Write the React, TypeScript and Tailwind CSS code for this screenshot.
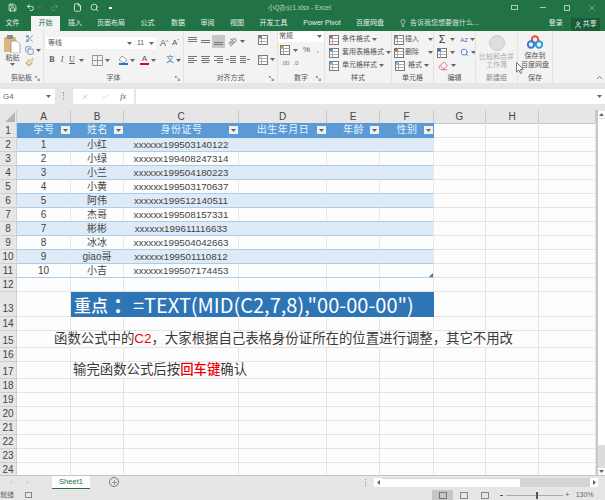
import { ReactNode } from 'react';
import { Check, ChevronUp, Copy, Eraser, File, Lightbulb, Paintbrush, Plus, Redo2, Save, Scissors, Search, Undo2, User, X } from 'lucide-react';

const CJK = "font-['Liberation_Sans','Noto_Sans_CJK_SC',sans-serif]";
const COLS = 'grid grid-cols-[17px_54px_53px_115px_88px_53px_54px_52px_53px_57px]';

const people = [
  ['1', '小红', 'xxxxxx199503140122'],
  ['2', '小绿', 'xxxxxx199408247314'],
  ['3', '小兰', 'xxxxxx199504180223'],
  ['4', '小黄', 'xxxxxx199503170637'],
  ['5', '阿伟', 'xxxxxx199512140511'],
  ['6', '杰哥', 'xxxxxx199508157331'],
  ['7', '彬彬', 'xxxxxx199611116633'],
  ['8', '冰冰', 'xxxxxx199504042663'],
  ['9', 'giao哥', 'xxxxxx199501110812'],
  ['10', '小吉', 'xxxxxx199507174453'],
];

function Caret({ className = 'mx-[2px]' }: { className?: string }) {
  return (
    <svg width="5" height="3" viewBox="0 0 5 3" className={`shrink-0 ${className}`}>
      <path d="M0 0h5L2.5 3z" fill="#666" />
    </svg>
  );
}

// horizontal lines for the alignment buttons
function Lines({ rows, active }: { rows: [number, number, number][]; active?: boolean }) {
  return (
    <span className={`flex h-[13px] w-[13px] items-center justify-center ${active ? 'bg-[#c6c6c6]' : ''}`}>
      <svg width="11" height="11" viewBox="0 0 11 11">
        {rows.map(([y, x, w], i) => (
          <rect key={i} x={x} y={y} width={w} height="1" fill="#777" />
        ))}
      </svg>
    </span>
  );
}

function Launcher() {
  return (
    <svg width="5" height="5" viewBox="0 0 5 5" className="shrink-0">
      <path d="M0 .5h2M.5 0v2M1.5 1.5l3 3M2.5 4.5h2v-2" stroke="#777" strokeWidth=".7" fill="none" />
    </svg>
  );
}

function Group({ label, w, children, launcher, muted }: { label: string; w: string; children: ReactNode; launcher?: boolean; muted?: boolean }) {
  return (
    <div className={`flex h-[52px] shrink-0 flex-col border-r border-[#e2e2e2] ${w}`}>
      <div className="h-[41px] overflow-hidden">{children}</div>
      <div className={`relative mt-[1px] text-center text-[7px] leading-[9px] ${muted ? 'text-[#888]' : 'text-[#555]'}`}>
        {label}
        {launcher && <span className="absolute right-[3px] top-[3px] flex"><Launcher /></span>}
      </div>
    </div>
  );
}

function StyleRow({ icon, text, caretGap }: { icon: ReactNode; text: string; caretGap?: boolean }) {
  return (
    <div className="flex h-[13px] items-center text-[7px] text-[#555]">
      <span className="mr-[1px] flex w-[14px] justify-center">{icon}</span>
      <span className="whitespace-nowrap">{text}</span>
      <Caret className={caretGap ? 'ml-[9px]' : 'ml-[2px]'} />
    </div>
  );
}

function TableIcon({ tint = '#4a90c8' }: { tint?: string }) {
  return (
    <svg width="10" height="10" viewBox="0 0 10 10">
      <rect x=".5" y=".5" width="9" height="9" fill="#fff" stroke="#777" />
      <path d="M.5 3.5h9M.5 6.5h9M3.5.5v9" stroke="#aaa" />
      <rect x="1" y="1" width="3" height="2" fill={tint} />
    </svg>
  );
}

function Ribbon() {
  return (
    <div className="flex h-[52px] bg-[#f3f3f3]">
      <Group label="剪贴板" w="w-[44px]" launcher>
        <div className="flex pl-[3px] pt-[3px]">
          <div className="flex w-[19px] flex-col items-center">
            <svg width="17" height="19" viewBox="0 0 17 19">
              <rect x="0" y="3" width="12" height="15" rx="1" fill="#dcb67a" />
              <rect x="3" y="1" width="6" height="4" fill="#8a8a8a" />
              <path d="M7 7h6l3 3v9H7z" fill="#fff" stroke="#888" strokeWidth=".7" />
            </svg>
            <span className="text-[7px] leading-[10px] text-[#555]">粘贴</span>
            <Caret />
          </div>
          <div className="ml-[3px] flex flex-col gap-[3px]">
            <Scissors size={9} color="#5a7fa8" />
            <div className="flex items-center">
              <Copy size={9} color="#5a7fa8" />
              <Caret />
            </div>
            <Paintbrush size={9} color="#c9973c" />
          </div>
        </div>
      </Group>

      <Group label="字体" w="w-[140px]" launcher>
        <div className="flex items-center pl-[2px] pt-[6px]">
          <div className="flex h-[12px] w-[88px] items-center justify-between bg-white pl-[2px] text-[7px] text-[#555]">
            等线<Caret />
          </div>
          <div className="ml-[1px] flex h-[12px] w-[21px] items-center justify-between bg-white pl-[2px] text-[7px] text-[#555]">
            11<Caret />
          </div>
          <span className="ml-[4px] w-[12px] text-[9px] leading-[12px] text-[#555]">A<sup className="text-[5px] text-[#2b6cb0]">^</sup></span>
          <span className="w-[10px] text-[8px] leading-[12px] text-[#555]">A<sup className="text-[5px] text-[#2b6cb0]">ˇ</sup></span>
        </div>
        <div className="mt-[5px] flex items-center pl-[3px] text-[#555]">
          <span className="w-[12px] text-center font-['Liberation_Serif',serif] text-[8px] font-bold">B</span>
          <span className="w-[12px] text-center font-['Liberation_Serif',serif] text-[8px] italic">I</span>
          <span className="w-[12px] text-center font-['Liberation_Serif',serif] text-[8px] underline">U</span>
          <Caret />
          <span className="ml-[6px] flex"><svg width="11" height="11" viewBox="0 0 11 11"><path d="M.5.5h10v10H.5zM5.5.5v10M.5 5.5h10" stroke="#999" fill="none" /></svg></span>
          <Caret />
          <span className="ml-[6px] flex flex-col items-center">
            <svg width="10" height="7" viewBox="0 0 10 7"><path d="M4 0l5 4-3 3-5-3z" fill="#fff" stroke="#777" strokeWidth=".7" /></svg>
            <span className="h-[2px] w-[9px] bg-[#2a70c0]" />
          </span>
          <Caret />
          <span className="ml-[3px] flex flex-col items-center text-[8px] leading-[8px]">
            A
            <span className="h-[2px] w-[9px] bg-[#f00000]" />
          </span>
          <Caret />
          <span className="ml-[8px] text-[8px] leading-[10px] text-[#4a7fb0]">文</span>
          <Caret />
        </div>
      </Group>

      <Group label="对齐方式" w="w-[94px]" launcher>
        <div className="flex pl-[2px] pt-[2px]">
          <div className="flex w-[70px] flex-col gap-[5px]">
            <div className="flex items-center pt-[2px]">
              <Lines rows={[[1, 1, 9], [3, 1, 9], [5, 1, 9]]} />
              <Lines rows={[[4, 1, 9], [6, 1, 9]]} />
              <Lines active rows={[[6, 1, 9], [8, 1, 9]]} />
              <span className="ml-[2px] w-[11px] -rotate-45 text-center text-[8px] leading-[12px] text-[#666]">ab</span>
              <Caret />
            </div>
            <div className="flex items-center">
              <Lines rows={[[2, 1, 9], [4, 1, 6], [6, 1, 9], [8, 1, 6]]} />
              <Lines rows={[[2, 1, 9], [4, 2, 7], [6, 1, 9], [8, 2, 7]]} />
              <Lines rows={[[2, 1, 9], [4, 4, 6], [6, 1, 9], [8, 4, 6]]} />
              <Lines rows={[[2, 4, 6], [4, 4, 6], [6, 4, 6], [8, 4, 6], [5, 0, 3]]} />
              <Lines rows={[[2, 1, 6], [4, 1, 6], [6, 1, 6], [8, 1, 6], [5, 8, 3]]} />
            </div>
          </div>
          <div className="ml-[2px] flex flex-col gap-[5px] pt-[2px]">
            <span className="flex h-[13px]"><TableIcon /></span>
            <span className="flex h-[13px] items-center"><TableIcon tint="#cfd8dc" /><Caret /></span>
          </div>
        </div>
      </Group>

      <Group label="数字" w="w-[47px]" launcher>
        <div className="flex h-[11px] items-center justify-between bg-white pl-[1px] text-[7px] text-[#555]">
          常规<Caret />
        </div>
        <div className="mt-[2px] flex items-center pl-[2px] text-[8px] leading-[12px] text-[#555]">
          <TableIcon tint="#e0a030" />
          <Caret className="mx-[3px]" />
          <span className="w-[11px] text-center">%</span>
          <span className="w-[11px] text-center">,</span>
        </div>
        <div className="mt-[1px] flex gap-[4px] pl-[3px] text-[6px] leading-[12px] text-[#4a7fb0]">
          <span>.00</span>
          <span>.0</span>
        </div>
      </Group>

      <Group label="样式" w="w-[67px]">
        <div className="pl-[2px] pt-[2px]">
          <StyleRow icon={<TableIcon tint="#d06040" />} text="条件格式" />
          <StyleRow icon={<TableIcon />} text="套用表格格式" />
          <StyleRow icon={<TableIcon tint="#7aa7d0" />} text="单元格样式" />
        </div>
      </Group>

      <Group label="单元格" w="w-[42px]">
        <div className="pl-[1px] pt-[2px]">
          <StyleRow icon={<TableIcon tint="#5b9bd5" />} text="插入" caretGap />
          <StyleRow icon={<TableIcon tint="#d06040" />} text="删除" caretGap />
          <StyleRow icon={<TableIcon tint="#90b8d8" />} text="格式" />
        </div>
      </Group>

      <Group label="编辑" w="w-[42px]">
        <div className="flex flex-col pl-[3px] pt-[2px] text-[#555]">
          <div className="flex h-[13px] items-center">
            <span className="w-[11px] text-center text-[11px] leading-[13px] text-[#333]">Σ</span>
            <Caret className="mx-[3px]" />
            <span className="ml-[2px] text-[6px] leading-[6px] text-[#2a70c0]">AZ</span>
            <Caret className="ml-[2px]" />
          </div>
          <div className="flex h-[13px] items-center">
            <span className="flex w-[11px] justify-center"><TableIcon tint="#2a70c0" /></span>
            <Caret className="mx-[3px]" />
            <span className="ml-[2px] flex"><Search size={9} color="#2a70c0" /></span>
            <Caret className="ml-[2px]" />
          </div>
          <div className="flex h-[13px] items-center">
            <span className="flex w-[11px] justify-center"><Eraser size={10} color="#e0607a" /></span>
            <Caret className="mx-[3px]" />
          </div>
        </div>
      </Group>

      <Group label="新建组" w="w-[42px]" muted>
        <div className="flex flex-col items-center pt-[4px] text-[7px] leading-[8px] text-[#aaa]">
          <span className="mb-[2px] h-[16px] w-[16px] rounded-full border border-[#ccc] bg-[#dedede]" />
          <span className="whitespace-nowrap">比较和合并</span>
          <span>工作簿</span>
        </div>
      </Group>

      <Group label="保存" w="w-[35px]">
        <div className="flex flex-col items-center pt-[4px] text-[7px] leading-[9px] text-[#555]">
          <svg width="16" height="14" viewBox="0 0 16 14" className="mb-[2px]">
            <circle cx="8" cy="4.5" r="3.2" fill="none" stroke="#e8503a" strokeWidth="2" />
            <circle cx="4" cy="9.5" r="3.2" fill="none" stroke="#2b7de0" strokeWidth="2" />
            <circle cx="12" cy="9.5" r="3.2" fill="none" stroke="#2b9de0" strokeWidth="2" />
          </svg>
          <span>保存到</span>
          <span className="whitespace-nowrap">百度网盘</span>
        </div>
      </Group>

      <div className="flex flex-1 items-end justify-end pb-[1px] pr-[1px]">
        <ChevronUp size={9} color="#555" />
      </div>
    </div>
  );
}

function TopBars() {
  const tabs: [string, string][] = [
    ['文件', 'w-[25px] mr-[6px]'],
    ['开始', 'w-[29px]'],
    ['插入', 'w-[30px]'],
    ['页面布局', 'w-[42px]'],
    ['公式', 'w-[31px]'],
    ['数据', 'w-[30px]'],
    ['审阅', 'w-[29px]'],
    ['视图', 'w-[30px]'],
    ['开发工具', 'w-[43px]'],
    ['Power Pivot', 'w-[54px]'],
    ['百度网盘', 'w-[42px]'],
  ];
  return (
    <div className="bg-[#217346] text-[7px] text-[#e3efe8]">
      <div className="flex h-[15px] items-center pl-[8px]">
        <Save size={9} color="#fff" className="mr-[9px]" />
        <Undo2 size={9} color="#fff" />
        <Caret className="mx-[2px]" />
        <Redo2 size={9} color="#5f9a7c" className="ml-[6px]" />
        <Caret className="mx-[2px] opacity-30" />
        <File size={9} color="#fff" className="ml-[5px]" />
        <Search size={9} color="#fff" className="ml-[8px]" />
        <span className="ml-[10px] h-[2px] w-[3px] bg-white" />
        <span className="ml-[156px] whitespace-nowrap text-[6.5px] text-[#bcd7c8]">小Q办公1.xlsx - Excel</span>
        <span className="ml-[180px] h-[5px] w-[7px] border border-[#a9cbb8]" />
        <span className="ml-[22px] h-[1px] w-[6px] bg-[#a9cbb8]" />
        <span className="ml-[18px] h-[6px] w-[6px] border border-[#a9cbb8]" />
        <X size={8} color="#a9cbb8" className="ml-[18px]" />
      </div>
      <div className="flex h-[16px] items-end">
        {tabs.map(([t, w]) => (
          <span key={t} className={`${w} shrink-0 whitespace-nowrap pb-[1px] text-center leading-[14px] ${t === '开始' ? 'bg-[#f3f3f3] text-[#217346]' : ''}`}>
            {t}
          </span>
        ))}
        <span className="ml-[8px] flex items-center pb-[1px] leading-[14px] text-[#d2e4da]">
          <Lightbulb size={8} color="#e3efe8" className="mr-[3px]" />
          告诉我您想要做什么...
        </span>
        <span className="ml-[70px] pb-[1px] leading-[14px]">登录</span>
        <span className="ml-[8px] flex h-[13px] w-[29px] items-center justify-center bg-[#1a5c38]">
          <User size={8} color="#fff" className="mr-[1px]" />
          共享
        </span>
      </div>
    </div>
  );
}

function FormulaBar() {
  return (
    <div className="flex h-[27px] items-start bg-[#e6e6e6] pt-[6px] text-[#777]">
      <div className="flex h-[15px] w-[55px] items-center justify-between bg-white pl-[3px] pr-[2px] text-[8px] text-[#666]">
        G4<Caret />
      </div>
      <span className="ml-[8px] mt-[3px] h-[8px] w-[1px] border-l border-dotted border-[#999]" />
      <div className="ml-[9px] flex h-[15px] w-[61px] items-center justify-around bg-white px-[2px]">
        <X size={8} color="#bbb" />
        <Check size={8} color="#bbb" />
        <span className="font-['Liberation_Serif',serif] text-[8px] italic text-[#555]">fx</span>
      </div>
      <div className="ml-[2px] flex h-[15px] flex-1 items-center justify-end bg-white pr-[1px]">
        <Caret />
      </div>
    </div>
  );
}

function RowNum({ n, tall }: { n: number; tall?: boolean }) {
  return (
    <div className={`flex items-end justify-center border-b border-r border-[#cfcfcf] bg-[#e6e6e6] text-[10px] leading-[13px] text-[#444] ${tall ? 'pb-[1px]' : ''}`}>
      {n}
    </div>
  );
}

function Blank({ span = '' }: { span?: string }) {
  return <div className={`border-b border-r border-[#e4e4e4] ${span}`} />;
}

function FilterBtn() {
  return (
    <span className="absolute right-[1px] top-[3px] flex h-[8px] w-[9px] items-center justify-center bg-[#f0f0f0]">
      <Caret className="m-0" />
    </span>
  );
}

function Sheet() {
  const heads = ['学号', '姓名', '身份证号', '出生年月日', '年龄', '性别'];
  return (
    <div className={`${CJK} h-[365px] flex-1 overflow-hidden bg-[#fdfdfd]`}>
      <div className={`${COLS} h-[13px] bg-[#e6e6e6] text-center text-[10px] leading-[13px] text-[#444]`}>
        <div className="flex items-end justify-end border-b border-r border-[#cfcfcf] p-[1px]">
          <svg width="10" height="10" viewBox="0 0 10 10"><path d="M10 0v10H0z" fill="#b5b5b5" /></svg>
        </div>
        {['A', 'B', 'C', 'D', 'E', 'F', 'G', 'H', ''].map((c, i) => (
          <div key={i} className="border-b border-r border-[#c8c8c8]">{c}</div>
        ))}
      </div>

      <div className={`${COLS} h-[15px]`}>
        <RowNum n={1} />
        {heads.map((h) => (
          <div key={h} className="relative bg-[#5b9bd5] text-center text-[10px] leading-[14px] tracking-[0.5px] text-[#eaf3fb]">
            {h}
            <FilterBtn />
          </div>
        ))}
        <Blank /><Blank /><Blank />
      </div>

      {people.map((p, i) => {
        const band = i % 2 === 0;
        const edge = band ? 'border-r-[#deebf7] bg-[#deebf7]' : 'border-r-[#e8e8e8]';
        return (
          <div key={p[0]} className={`${COLS} h-[14px]`}>
            <RowNum n={i + 2} />
            {[...p, '', '', ''].map((v, j) => (
              <div
                key={j}
                className={`relative border-b border-r border-b-[#a9cdea] text-center leading-[13px] text-[#444] ${j === 2 ? 'text-[9.8px]' : 'text-[10px]'} ${edge} ${j === 5 ? 'border-r-[#a9cdea]' : ''}`}
              >
                {v}
                {i === 9 && j === 5 && <span className="absolute bottom-0 right-0 h-0 w-0 border-b-[4px] border-l-[4px] border-b-[#2e75b6] border-l-transparent" />}
              </div>
            ))}
            <Blank /><Blank /><Blank />
          </div>
        );
      })}

      <div className={`${COLS} h-[14px]`}>
        <RowNum n={12} />
        {Array.from({ length: 9 }, (_, i) => <Blank key={i} />)}
      </div>

      <div className={`${COLS} h-[25px]`}>
        <RowNum n={13} tall />
        <Blank />
        <div className="col-span-5 flex items-center whitespace-nowrap bg-[#2e75b6] pl-[3px] font-['Noto_Sans_CJK_SC',sans-serif] text-[20px] leading-[24px] text-white">
          <span className="text-[17px] font-medium">重点</span>
          <span className="ml-[5px] font-bold">：</span>
          =TEXT(MID(C2,7,8),"00-00-00")
        </div>
        <Blank /><Blank /><Blank />
      </div>

      <div className={`${COLS} h-[14px]`}>
        <RowNum n={14} />
        {Array.from({ length: 9 }, (_, i) => <Blank key={i} />)}
      </div>

      <div className={`${COLS} h-[17px]`}>
        <RowNum n={15} />
        <div className="col-span-8 whitespace-nowrap border-b border-r border-[#e4e4e4] pl-[37px] text-[13.4px] leading-[16px] text-[#3a3a3a]">
          函数公式中的<span className="font-medium text-[#f00000]">C2</span>，大家根据自己表格身份证所在的位置进行调整，其它不用改
        </div>
        <Blank />
      </div>

      <div className={`${COLS} h-[14px]`}>
        <RowNum n={16} />
        {Array.from({ length: 9 }, (_, i) => <Blank key={i} />)}
      </div>

      <div className={`${COLS} h-[17px]`}>
        <RowNum n={17} />
        <Blank />
        <div className="col-span-3 whitespace-nowrap border-b border-r border-[#e4e4e4] pl-[2px] text-[13.4px] leading-[16px] text-[#3a3a3a]">
          输完函数公式后按<span className="font-medium text-[#f00000]">回车键</span>确认
        </div>
        {Array.from({ length: 5 }, (_, i) => <Blank key={i} />)}
      </div>

      {[18, 19, 20, 21, 22, 23, 24].map((n) => (
        <div key={n} className={`${COLS} h-[14px]`}>
          <RowNum n={n} />
          {Array.from({ length: 9 }, (_, i) => <Blank key={i} />)}
        </div>
      ))}
    </div>
  );
}

function VScroll() {
  return (
    <div className="flex w-[9px] flex-col border-l-2 border-[#c9c9c9] bg-[#e6e6e6]">
      <div className="mt-[1px] flex h-[7px] items-center justify-center bg-white"><Caret className="m-0 rotate-180" /></div>
      <div className="mt-[1px] h-[326px] bg-white" />
      <div className="flex-1 bg-[#dcdcdc]" />
      <div className="flex h-[7px] items-center justify-center bg-white"><Caret className="m-0" /></div>
    </div>
  );
}

function SheetTabs() {
  return (
    <div className={`${CJK} flex h-[15px] border-t border-[#c4c4c4] bg-[#e6e6e6] text-[8px]`}>
      <span className="ml-[10px] w-[16px] text-[7px] leading-[13px] text-[#bbb]">‹</span>
      <span className="w-[26px] text-[7px] leading-[13px] text-[#bbb]">›</span>
      <div className="h-[13px] w-[38px] border-b border-[#217346] bg-[#fdfdfd] text-center text-[7.5px] leading-[12px] text-[#217346]">Sheet1</div>
      <span className="ml-[19px] mt-[1px] flex h-[10px] w-[10px] items-center justify-center rounded-full border border-[#777]">
        <Plus size={7} color="#666" />
      </span>
      <span className="ml-[246px] mt-[3px] h-[7px] w-[1px] border-l border-dotted border-[#999]" />
      <div className="ml-[8px] mt-[2px] flex h-[9px] w-[224px] items-center bg-[#d4d4d4]">
        <span className="flex h-[9px] w-[8px] items-center justify-center bg-white"><Caret className="m-0 rotate-90" /></span>
        <span className="h-[8px] w-[138px] bg-white" />
        <span className="ml-auto flex h-[9px] w-[8px] items-center justify-center bg-white"><Caret className="m-0 -rotate-90" /></span>
      </div>
    </div>
  );
}

function StatusBar() {
  return (
    <div className={`${CJK} flex h-[10px] items-center overflow-hidden bg-[#e6e6e6] text-[7px] text-[#666]`}>
      <span className="whitespace-nowrap">就绪</span>
      <span className="ml-[11px] h-[6px] w-[7px] border border-[#888]" />
      <span className="ml-[400px] flex h-[10px] w-[21px] items-center justify-center bg-[#c6c6c6]">
        <span className="h-[7px] w-[8px] border border-[#777]" />
      </span>
      <span className="ml-[7px] h-[7px] w-[8px] border border-[#888]" />
      <span className="ml-[13px] h-[7px] w-[8px] border border-[#888]" />
      <span className="ml-[11px] h-[1px] w-[3px] bg-[#555]" />
      <span className="relative ml-[3px] h-[1px] w-[57px] bg-[#aaa]">
        <span className="absolute left-[30px] top-[-3px] h-[7px] w-[2px] bg-[#555]" />
      </span>
      <span className="ml-[2px] text-[8px]">+</span>
      <span className="ml-[6px] text-[7px]">130%</span>
    </div>
  );
}

export default function App() {
  return (
    <div className={`${CJK} relative flex h-[500px] w-[605px] flex-col overflow-hidden bg-[#e6e6e6]`}>
      <TopBars />
      <Ribbon />
      <FormulaBar />
      <div className="flex">
        <Sheet />
        <VScroll />
      </div>
      <SheetTabs />
      <StatusBar />
      {/* mouse pointer caught in the capture */}
      <svg width="8" height="12" viewBox="0 0 8 12" className="absolute left-[516px] top-[62px]">
        <path d="M.5.5v9.5l2.3-2 1.6 3.4 1.5-.7-1.6-3.3h3z" fill="#fff" stroke="#555" strokeWidth=".8" />
      </svg>
    </div>
  );
}
